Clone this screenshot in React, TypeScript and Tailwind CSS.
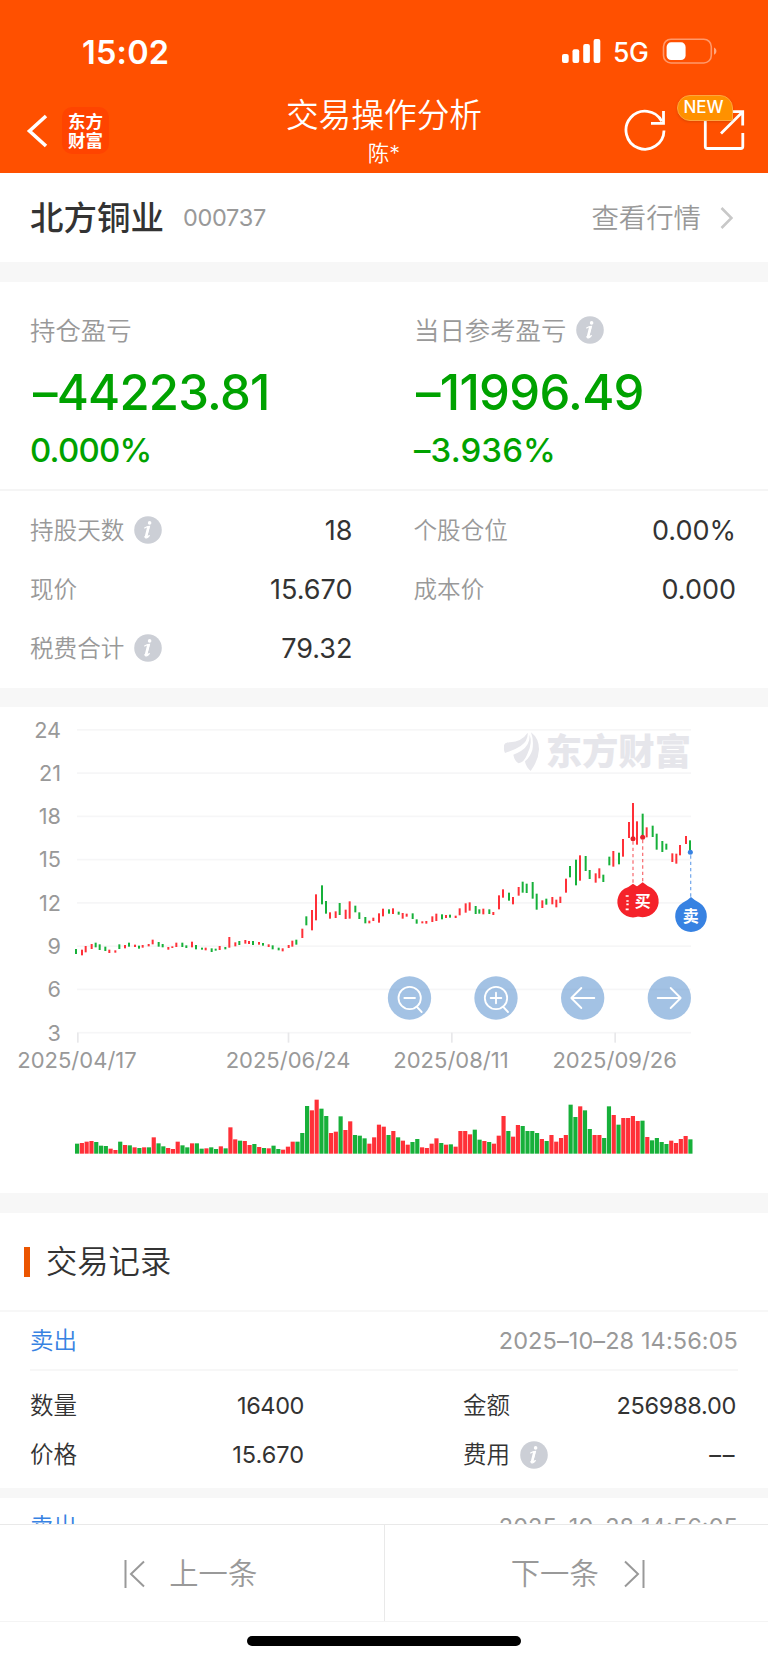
import React from "react";

type Bar = [top: number, bottom: number, up: 0 | 1];

// Daily high/low extents for each session; third value marks a rising day.
const CANDLES: Bar[] = [
  [747, 762, 0], [749, 766, 1], [738, 757, 1], [732, 747, 1], [728, 742, 0], [733, 750, 0], [740, 753, 0], [749, 759, 1],
  [751, 758, 1], [733, 747, 0], [735, 745, 1], [728, 740, 0], [734, 741, 1], [737, 746, 0], [735, 743, 1], [732, 739, 1],
  [719, 733, 1], [726, 740, 0], [732, 742, 0], [741, 749, 1], [739, 744, 1], [728, 741, 1], [728, 741, 0], [736, 744, 0],
  [725, 742, 1], [735, 748, 0], [743, 749, 0], [743, 751, 1], [745, 756, 0], [746, 752, 0], [738, 750, 1], [741, 748, 0],
  [711, 743, 1], [727, 739, 1], [723, 735, 0], [720, 731, 1], [723, 732, 1], [723, 735, 0], [726, 734, 1], [729, 737, 0],
  [733, 741, 1], [736, 748, 0], [743, 751, 0], [745, 754, 1], [735, 744, 1], [722, 740, 1], [719, 734, 0], [686, 714, 1],
  [649, 676, 0], [630, 691, 1], [583, 661, 1], [556, 613, 0], [603, 641, 0], [637, 656, 1], [634, 654, 1], [609, 645, 0],
  [629, 657, 1], [604, 656, 1], [617, 637, 0], [637, 657, 0], [651, 670, 0], [662, 670, 1], [653, 663, 1], [640, 668, 1],
  [626, 649, 1], [628, 641, 0], [625, 642, 1], [635, 644, 0], [639, 656, 1], [641, 650, 1], [640, 657, 0], [658, 671, 0],
  [664, 670, 1], [663, 671, 1], [649, 666, 1], [641, 663, 1], [643, 658, 0], [645, 654, 1], [644, 653, 0], [647, 654, 1],
  [625, 646, 1], [610, 638, 1], [607, 632, 1], [618, 642, 0], [628, 641, 0], [626, 643, 1], [628, 642, 0], [636, 645, 1],
  [586, 628, 1], [568, 593, 1], [578, 602, 0], [591, 613, 1], [561, 587, 1], [545, 578, 0], [551, 579, 0], [546, 596, 0],
  [581, 629, 0], [601, 624, 1], [596, 614, 0], [591, 613, 1], [599, 622, 1], [590, 609, 1], [536, 578, 1], [498, 532, 0],
  [479, 556, 0], [466, 542, 1], [468, 513, 0], [510, 537, 0], [520, 548, 1], [505, 535, 1], [524, 546, 0], [470, 496, 0],
  [453, 500, 1], [458, 493, 0], [417, 470, 1], [366, 414, 1], [309, 420, 1], [364, 434, 1], [341, 412, 0], [382, 412, 1],
  [377, 411, 0], [401, 449, 0], [423, 456, 0], [431, 449, 0], [460, 486, 1], [461, 491, 1], [435, 466, 1], [408, 432, 1],
  [421, 458, 0],
];

// Horizontal centre of each session's candle.
const CANDLE_X = [
  228, 246, 257, 275, 287, 299, 316, 328, 346, 358, 375, 387, 405, 417, 428, 446, 458, 476, 488, 505, 517, 529, 547, 559,
  576, 588, 606, 617, 635, 647, 659, 676, 688, 706, 718, 736, 747, 759, 777, 789, 806, 818, 836, 848, 866, 877, 889, 907,
  919, 936, 948, 966, 978, 990, 1007, 1019, 1037, 1049, 1066, 1078, 1096, 1108, 1120, 1137, 1149, 1167, 1179, 1196, 1208,
  1220, 1238, 1250, 1267, 1279, 1297, 1309, 1326, 1338, 1350, 1367, 1379, 1397, 1409, 1427, 1438, 1450, 1468, 1480, 1497,
  1509, 1527, 1539, 1556, 1568, 1580, 1598, 1610, 1627, 1639, 1657, 1669, 1681, 1698, 1710, 1728, 1740, 1757, 1769, 1787,
  1798, 1810, 1828, 1840, 1857, 1869, 1887, 1899, 1911, 1928, 1940, 1958, 1970, 1987, 1999, 2017, 2029, 2040, 2058, 2070,
];

// Volume heights; positive for a rising day, negative for a falling one.
const VOLUMES = [
  -30, 32, 36, 38, -35, -24, -23, 15, 11, -36, 26, -25, 19, -17, 19, -19, 49, -31, -22, 17, 14, 36, -25, -19, 31, -31,
  -15, 16, -19, -14, 22, -16, 79, 43, -39, 38, 26, -29, 20, -17, 16, -24, -14, 12, 21, 36, -36, -62, -143, 130, 162,
  -135, -113, 62, 66, -112, 71, 97, -56, -54, -46, 30, 49, 87, 81, -56, 68, -49, 39, 27, -35, -44, 19, 17, 30, 46, -32,
  27, -28, 21, 68, 68, 58, -72, -42, 38, -35, 30, 54, 113, -68, 51, 86, -83, -68, -68, -62, 44, -38, 56, 36, 47, 56,
  -147, -110, 142, -130, -74, 56, 56, -47, -142, 116, -87, 107, 107, 113, 98, -99, 50, -40, -47, -35, -29, 39, 32, 44,
  53, -43,
];

const RED = "#ff3038";
const GREEN = "#17b03a";

function Info() {
  return (
    <svg className="h-7 w-7 shrink-0" viewBox="0 0 28 28">
      <circle cx="14" cy="14" r="13.8" fill="#cccfd6" />
      <circle cx="15.6" cy="6.9" r="1.8" fill="#fff" />
      <path d="M10.6 11.9c1.6-.9 3-1.3 4.9-1.5l-2.7 9.7c-.3 1.2.8 1 2.6-.6M10.9 20.6c.5 2.3 2.5 1.6 4.5-.9" fill="none" stroke="#fff" strokeWidth="1.1" strokeLinecap="round" />
      <path d="M14.3 11.2 12 20.7" stroke="#fff" strokeWidth="2.5" strokeLinecap="round" />
    </svg>
  );
}

function Band({ className }: { className: string }) {
  return <div className={"shrink-0 bg-[#f7f7f7] " + className} />;
}

function Header() {
  return (
    <header className="h-[173px] shrink-0 bg-[#ff5000] text-white">
      <div className="flex h-[90px] items-center justify-between pl-[82px] pr-[50px] pt-3">
        <span className="mt-[4px] text-[32.5px] font-semibold leading-none tracking-[0.2px]">15:02</span>
        <div className="flex items-center">
          <svg className="h-6 w-10" viewBox="0 0 40 24" fill="#fff">
            <rect x="1" y="15" width="6.7" height="9" rx="2" />
            <rect x="11.5" y="10.3" width="6.7" height="13.7" rx="2" />
            <rect x="22.2" y="5" width="6.7" height="19" rx="2" />
            <rect x="32.6" y="0" width="6.7" height="24" rx="2" />
          </svg>
          <span className="ml-3 mt-[2px] w-[37px] text-[26.5px] font-medium leading-none tracking-[-0.3px]">5G</span>
          <svg className="ml-[12px] h-[26px] w-[56px]" viewBox="0 0 56 26" fill="none">
            <rect x="1.5" y="1.2" width="47.8" height="23.8" rx="7.5" stroke="#fff" strokeOpacity=".42" strokeWidth="1.6" />
            <rect x="4.6" y="4.3" width="19" height="17.8" rx="4.6" fill="#fff" />
            <path d="M52 9.5v7.2c1.7-.7 2.4-2 2.4-3.6s-.7-2.9-2.4-3.6z" fill="#fff" fillOpacity=".5" />
          </svg>
        </div>
      </div>
      <div className="flex h-[83px]">
        <div className="flex w-[250px] pl-[25px]">
          <svg className="mt-[23px] h-9 w-6" viewBox="0 0 24 36" fill="none">
            <path d="M21 3 4.5 18 21 33" stroke="#fff" strokeWidth="3.6" />
          </svg>
          <div className="ml-[13px] mt-[17px] flex h-[47px] w-[47px] flex-col items-center justify-center rounded-[10px] bg-[#ff4400] text-[17.5px] font-bold leading-[19px]">
            <span>东方</span>
            <span>财富</span>
          </div>
        </div>
        <div className="flex flex-1 flex-col items-center">
          <h1 className="mt-[5px] text-[32.7px] font-[350] leading-[40px]">交易操作分析</h1>
          <p className="mt-[4px] text-[21.5px] font-[350] leading-[28px]">陈*</p>
        </div>
        <div className="relative flex w-[250px] justify-end pr-[22px] pt-[18px]">
          <svg className="h-11 w-11" viewBox="623 108 44 44" fill="none" stroke="#fff" strokeWidth="2.8">
            <path d="M664 130.5A19 19 0 1 1 661.8 121.3" />
            <path d="M663.5 111v12.3H651" />
          </svg>
          <svg className="ml-[35px] h-11 w-11" viewBox="702 108 44 44" fill="none" stroke="#fff" strokeWidth="2.8">
            <path d="M705.3 119v27.5q0 2 2 2h33.5q2 0 2-2V133" />
            <path d="M721 133.5l21-21M730 111.6h12.7v14" />
          </svg>
          <div className="absolute left-[159px] top-[5px] flex h-[26px] w-[56px] items-center justify-center rounded-[13px] rounded-br-[2px] border border-[#ffa63d] bg-[#ff9100] pr-[3px] text-[17px] font-medium shadow-sm">
            NEW
          </div>
        </div>
      </div>
    </header>
  );
}

function Metric({ label, info, value }: { label: string; info?: boolean; value: string }) {
  return (
    <div className="flex h-[59px] items-center">
      <span className="pt-[2px] text-[23.6px] font-[350] text-[#999]">{label}</span>
      {info && <span className="ml-[10px]"><Info /></span>}
      <span className="ml-auto pt-[3px] text-[27px] font-[380] text-[#333]">{value}</span>
    </div>
  );
}

function Summary(props: { label: string; info?: boolean; value: string; pct: string; valueClass: string; pctClass: string }) {
  return (
    <div className="flex flex-col">
      <div className="flex h-10 items-center text-[25.4px] font-[350] text-[#999]">
        <span className="pt-[2px]">{props.label}</span>
        {props.info && <span className="ml-[10px]"><Info /></span>}
      </div>
      <div className={"mt-[11px] text-[49px] font-[540] leading-[64px] text-[#00a200] " + props.valueClass}>{props.value}</div>
      <div className={"mt-[5px] text-[33px] font-[520] leading-[40px] text-[#00a200] " + props.pctClass}>{props.pct}</div>
    </div>
  );
}

const GRID = [24, 21, 18, 15, 12, 9, 6, 3];
const DATES: [number, number, string][] = [
  [234, 231, "2025/04/17"],
  [866, 864, "2025/06/24"],
  [1356, 1353, "2025/08/11"],
  [1846, 1844, "2025/09/26"],
];

function Chart() {
  return (
    <svg className="block h-[486px] w-[768px]" viewBox="0 21 2304 1458">
      {GRID.map((v, i) => (
        <g key={v}>
          <rect x="231" y={87 + i * 129.8} width="1842" height="5" fill="#f6f6f7" />
          <text x="183" y={113 + i * 129.8} textAnchor="end" fontSize="65" fontWeight="380" fill="#999">{v}</text>
        </g>
      ))}
      {DATES.map(([tick, x, label]) => (
        <g key={label}>
          <rect x={tick - 3} y="998" width="5" height="30" fill="#e8e8ea" />
          <text x={x} y="1104" textAnchor="middle" fontSize="66" fontWeight="380" fill="#999">{label}</text>
        </g>
      ))}

      <g fill="#e6e6eb">
        <path d="M1512 143C1511 131 1516 128 1530 127Q1566 124 1583 98Q1585 122 1562 138Q1544 150 1515 159Q1511 152 1512 143Z" />
        <path d="M1589 104Q1590 136 1563 153Q1551 160 1540 164Q1543 182 1556 190C1568 187 1575 180 1583 160Q1598 128 1589 104Z" />
        <path d="M1593 97Q1617 115 1617 148Q1616 180 1592 213Q1577 200 1575 184Q1590 172 1597 150Q1602 122 1593 97Z" />
        <text x="1637" y="196" fontSize="109" fontWeight="900">东方财富</text>
      </g>

      {CANDLES.map(([top, bottom, up], i) => (
        <rect key={i} x={CANDLE_X[i] - 3} y={top} width="6" height={bottom - top} fill={up ? RED : GREEN} />
      ))}
      {VOLUMES.map((v, i) => (
        <rect key={i} x={225 + 14.375 * i} y={1361 - Math.abs(v)} width="12.5" height={Math.abs(v)} fill={v > 0 ? RED : GREEN} />
      ))}

      <g fill="none" strokeWidth="4" strokeDasharray="10 9">
        <path d="M1899 424V552" stroke="#f8777b" />
        <path d="M1928 420V548" stroke="#f8777b" />
        <path d="M2072 466V592" stroke="#7eaeec" />
      </g>
      <g fill="#e62129">
        <circle cx="1899" cy="416" r="7.5" />
        <circle cx="1928" cy="412" r="7.5" />
      </g>
      <circle cx="2071" cy="457" r="7.5" fill="#3782e2" />
      <g fill="#f5222a">
        <path d="M1899 551Q1912 561 1925 566A47 47 0 1 1 1873 566Q1887 561 1899 551Z" />
        <path d="M1928 547Q1941 558 1955 564A48 48 0 1 1 1901 564Q1915 558 1928 547Z" />
      </g>
      <path d="M1877 588h9M1879 603h7M1879 613h7M1877 628h9" stroke="#fff" strokeWidth="5" />
      <path d="M2073 591Q2086 603 2098 608A47.5 47.5 0 1 1 2048 608Q2061 603 2073 591Z" fill="#3782e2" />
      <text x="1928" y="621" fontSize="48" fontWeight="600" fill="#fff" textAnchor="middle">买</text>
      <text x="2072" y="666" fontSize="48" fontWeight="600" fill="#fff" textAnchor="middle">卖</text>

      {[1228.5, 1488, 1748, 2008].map((x) => (
        <circle key={x} cx={x} cy="894" r="65" fill="#4885ca" fillOpacity=".5" />
      ))}
      <g fill="none" stroke="#fff" strokeWidth="5.5" strokeLinecap="round" strokeLinejoin="round">
        <circle cx="1229" cy="894" r="33.5" />
        <path d="M1213 894h32M1250 920l15 16" />
        <circle cx="1488" cy="894" r="33.5" />
        <path d="M1472 894h32M1488 878v32M1509 920l15 16" />
        <path d="M1783 894h-68M1744 864l-30 30 30 30" />
        <path d="M1973 894h69M2012 864l30 30-30 30" />
      </g>
    </svg>
  );
}

function RecordHead() {
  return (
    <div className="mx-[30px] flex h-[59px] shrink-0 items-center justify-between border-b-2 border-[#f7f7f7] pt-px text-[23.5px] font-[350]">
      <span className="text-[#3782e2]">卖出</span>
      <span className="font-[380] tracking-[0.1px] text-[#999]">2025–10–28 14:56:05</span>
    </div>
  );
}

function Field({ label, info, value, valueClass }: { label: string; info?: boolean; value: string; valueClass: string }) {
  return (
    <div className="flex h-[49px] items-center text-[23.5px] font-[350] text-[#333]">
      <span>{label}</span>
      {info && <span className="ml-[10px]"><Info /></span>}
      <span className={"ml-auto font-[380] " + valueClass}>{value}</span>
    </div>
  );
}

export default function App() {
  return (
    <div className="flex h-[1663px] w-[768px] flex-col overflow-hidden bg-white font-['Inter','Noto_Sans_CJK_SC',sans-serif]">
      <Header />
      <div className="flex h-[89px] shrink-0 items-center pl-[30px] pr-[35px]">
        <span className="pt-[2px] text-[33.5px] font-medium text-[#333]">北方铜业</span>
        <span className="ml-[19px] pt-px text-[23.5px] font-[380] tracking-[-0.3px] text-[#999]">000737</span>
        <span className="ml-auto pt-[2px] text-[27.4px] font-[350] text-[#999]">查看行情</span>
        <svg className="ml-[18px] h-6 w-3.5" viewBox="0 0 14 24" fill="none">
          <path d="M2.5 2 12.5 12 2.5 22" stroke="#c8c8c8" strokeWidth="2.6" />
        </svg>
      </div>
      <Band className="h-5" />
      <section className="grid h-[209px] shrink-0 grid-cols-2 border-b-2 border-[#f5f5f5] pl-[30px] pt-7">
        <Summary label="持仓盈亏" value="–44223.81" pct="0.000%" valueClass="pl-[3px] tracking-[-0.8px]" pctClass="tracking-[-0.8px]" />
        <div className="pl-[15px]">
          <Summary label="当日参考盈亏" info value="–11996.49" pct="–3.936%" valueClass="pl-[2px] tracking-[-0.7px]" pctClass="tracking-[0.1px]" />
        </div>
      </section>
      <section className="grid h-[197px] shrink-0 grid-cols-2 content-start gap-x-[61px] pl-[30px] pr-[32px] pt-[9px]">
        <Metric label="持股天数" info value="18" />
        <Metric label="个股仓位" value="0.00%" />
        <Metric label="现价" value="15.670" />
        <Metric label="成本价" value="0.000" />
        <Metric label="税费合计" info value="79.32" />
      </section>
      <Band className="h-[19px]" />
      <section className="h-[486px] shrink-0">
        <Chart />
      </section>
      <Band className="h-5" />
      <div className="flex h-[99px] shrink-0 items-center border-b-2 border-[#f7f7f7] pl-6">
        <span className="h-[30px] w-1.5 bg-[#eb5500]" />
        <h2 className="ml-4 pt-[2px] text-[31.3px] font-[350] text-[#333]">交易记录</h2>
      </div>
      <RecordHead />
      <div className="grid h-[117px] shrink-0 grid-cols-[274px_273px] content-start gap-x-[159px] pl-[30px] pt-[10px]">
        <Field label="数量" value="16400" valueClass="tracking-[-0.4px]" />
        <Field label="金额" value="256988.00" valueClass="tracking-[-0.3px]" />
        <Field label="价格" value="15.670" valueClass="tracking-normal" />
        <Field label="费用" info value="––" valueClass="tracking-[1.6px]" />
      </div>
      <Band className="h-[10px]" />
      <div className="h-[26px] shrink-0 overflow-hidden">
        <RecordHead />
      </div>
      <nav className="flex h-[98px] shrink-0 border-y border-[#e9e9e9] border-b-[#f4f4f4] text-[29.3px] font-[350] text-[#999]">
        <button className="flex flex-1 items-center justify-center border-r border-[#e9e9e9] pr-1">
          <svg className="mr-[23px] mt-px h-[30px] w-6" viewBox="0 0 24 30" fill="none" stroke="currentColor" strokeWidth="2">
            <path d="M3.5 1v28M22 2.5 9 15l13 12.5" />
          </svg>
          <span className="pt-[2px]">上一条</span>
        </button>
        <button className="flex flex-1 items-center justify-center pl-1">
          <span className="pt-[2px]">下一条</span>
          <svg className="ml-[23px] mt-px h-[30px] w-6" viewBox="0 0 24 30" fill="none" stroke="currentColor" strokeWidth="2">
            <path d="M21.5 1v28M3 2.5 16 15 3 27.5" />
          </svg>
        </button>
      </nav>
      <div className="flex justify-center pt-[14px]">
        <span className="h-[10px] w-[274px] rounded-full bg-black" />
      </div>
    </div>
  );
}
